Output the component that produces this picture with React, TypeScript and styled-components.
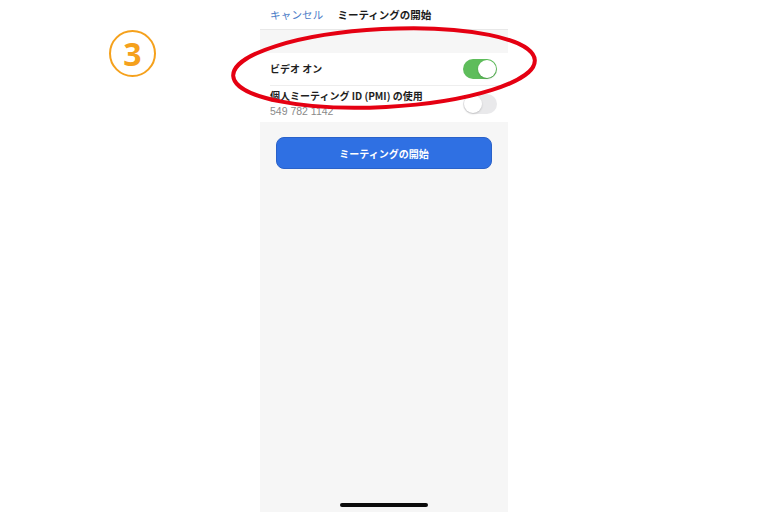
import styled, { createGlobalStyle } from "styled-components";

const GlobalStyle = createGlobalStyle`
  html, body {
    margin: 0;
    padding: 0;
    background: #ffffff;
  }
  body {
    font-family: "Noto Sans CJK JP", "Noto Sans", sans-serif;
  }
`;

const Toggle = ({ on }: { on: boolean }) => (
  <SToggle $on={on}>
    <SKnob $on={on} />
  </SToggle>
);

export default function App() {
  return (
    <>
      <GlobalStyle />
      <SStage>
        <SSide>
          <SStep>3</SStep>
        </SSide>

        <SPhone>
          <SHeader>
            <SCancel>キャンセル</SCancel>
            <STitle>ミーティングの開始</STitle>
          </SHeader>

          <SGroup>
            <SRow $height={32}>
              <SLabel>ビデオ オン</SLabel>
              <Toggle on />
            </SRow>
            <SDivider />
            <SRow $height={36}>
              <SColumn>
                <SLabel>個人ミーティング ID (PMI) の使用</SLabel>
                <SSub>549 782 1142</SSub>
              </SColumn>
              <Toggle on={false} />
            </SRow>
          </SGroup>

          <SButtonWrap>
            <SStartButton>ミーティングの開始</SStartButton>
          </SButtonWrap>

          <SSpacer />
          <SHomeBar />
        </SPhone>

        <SSide />

        <SHighlight viewBox="0 0 320 90" aria-hidden>
          <ellipse
            cx="160"
            cy="45"
            rx="151"
            ry="39"
            transform="rotate(-3 160 45)"
            fill="none"
            stroke="#e50012"
            strokeWidth="4"
          />
        </SHighlight>
      </SStage>
    </>
  );
}

const SStage = styled.div`
  position: relative;
  display: grid;
  grid-template-columns: 1fr 248px 1fr;
  width: 768px;
  height: 512px;
  overflow: hidden;
`;

const SSide = styled.div`
  padding: 30px 0 0 109px;
`;

const SStep = styled.div`
  width: 43px;
  height: 43px;
  border: 2px solid #f5a11c;
  border-radius: 50%;
  display: grid;
  place-items: center;
  color: #f5a11c;
  font-family: "Open Sans", "Noto Sans", sans-serif;
  font-weight: 700;
  font-size: 32px;
  line-height: 1;
`;

const SPhone = styled.div`
  display: flex;
  flex-direction: column;
  background: #f6f6f6;
  height: 512px;
`;

const SHeader = styled.div`
  display: flex;
  align-items: center;
  gap: 14px;
  height: 29px;
  padding: 0 10px;
  background: #ffffff;
  border-bottom: 1px solid #e8e8e8;
`;

const SCancel = styled.span`
  font-size: 10.5px;
  color: #4a7cc7;
  letter-spacing: 0.2px;
`;

const STitle = styled.span`
  font-size: 10.5px;
  font-weight: 700;
  color: #1c1c1c;
`;

const SGroup = styled.div`
  margin-top: 23px;
  background: #ffffff;
`;

const SRow = styled.div<{ $height: number }>`
  display: flex;
  align-items: center;
  justify-content: space-between;
  height: ${(p) => p.$height}px;
  padding: 0 10px;
`;

const SDivider = styled.div`
  height: 1px;
  margin-left: 10px;
  background: #eeeeee;
`;

const SColumn = styled.div`
  display: flex;
  flex-direction: column;
  gap: 2px;
  margin-top: -2px;
`;

const SLabel = styled.span`
  font-size: 10px;
  font-weight: 700;
  color: #1e1e1e;
  line-height: 14px;
`;

const SSub = styled.span`
  font-family: "Liberation Sans", "Noto Sans", sans-serif;
  font-size: 10.5px;
  color: #8a8a8a;
  line-height: 13px;
`;

const SToggle = styled.div<{ $on: boolean }>`
  display: flex;
  align-items: center;
  justify-content: ${(p) => (p.$on ? "flex-end" : "flex-start")};
  width: 34px;
  height: 20px;
  box-sizing: border-box;
  padding: 1px;
  border-radius: 10px;
  background: ${(p) => (p.$on ? "#5ebd5b" : "#e9e9eb")};
  margin-right: 1px;
`;

const SKnob = styled.div<{ $on: boolean }>`
  width: 18px;
  height: 18px;
  border-radius: 50%;
  background: #ffffff;
  box-shadow: 0 1px 2px rgba(0, 0, 0, 0.18);
`;

const SButtonWrap = styled.div`
  padding: 15px 16px 0;
`;

const SStartButton = styled.button`
  width: 100%;
  height: 32px;
  border: 1px solid #2a62c9;
  border-radius: 8px;
  background: #2f70e3;
  color: #ffffff;
  font-family: "Noto Sans CJK JP", sans-serif;
  font-size: 10px;
  font-weight: 700;
`;

const SSpacer = styled.div`
  flex: 1;
`;

const SHomeBar = styled.div`
  align-self: center;
  width: 88px;
  height: 4px;
  border-radius: 2px;
  background: #0b0b0b;
  margin-bottom: 5px;
`;

const SHighlight = styled.svg`
  position: absolute;
  left: 224px;
  top: 23px;
  width: 320px;
  height: 90px;
  overflow: visible;
`;
